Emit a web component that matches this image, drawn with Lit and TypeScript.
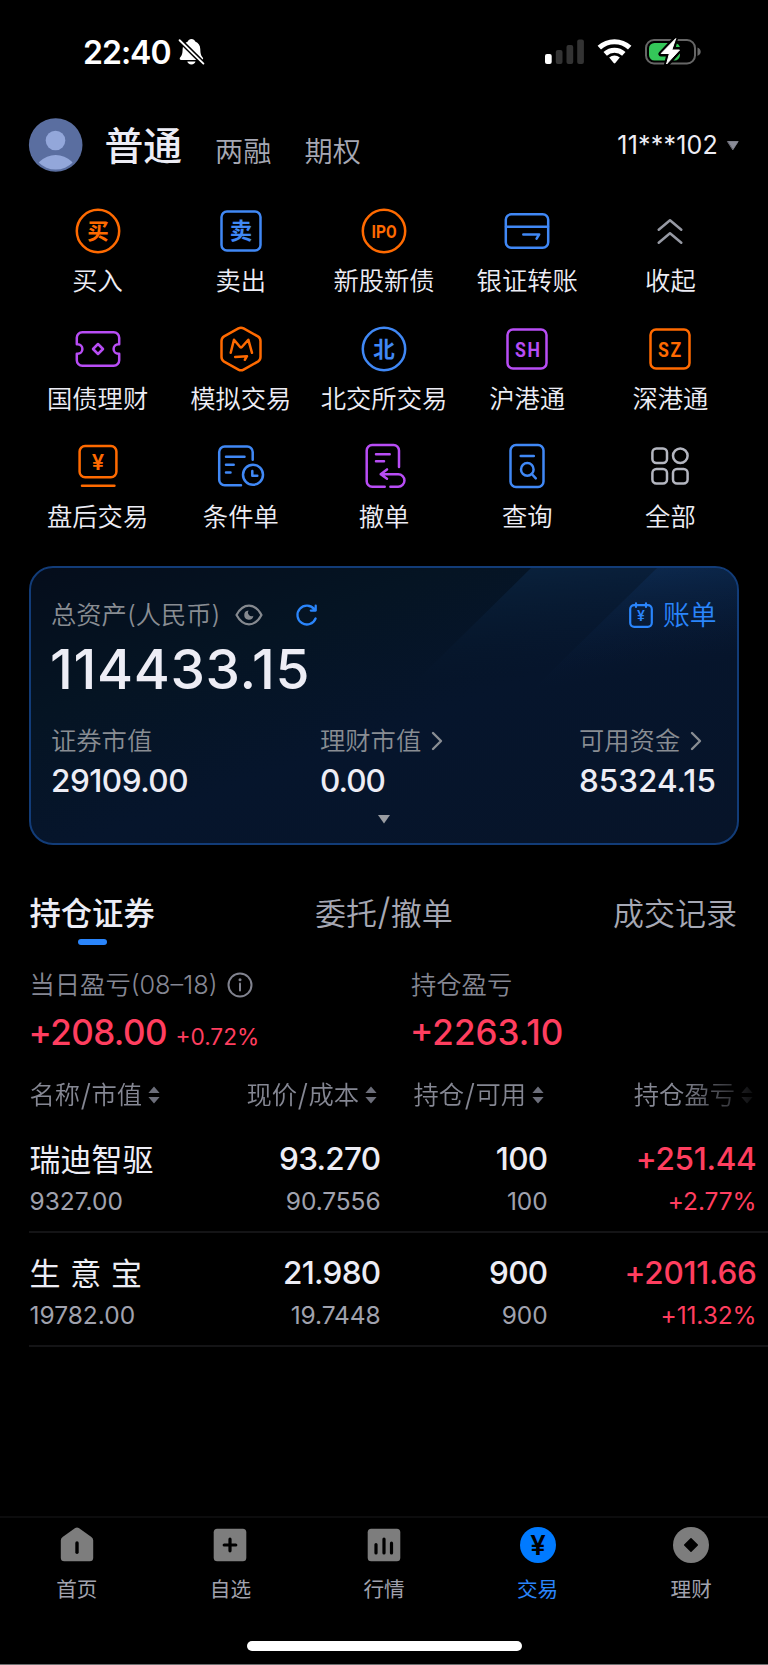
import { LitElement, html, css, svg } from "lit";
import { customElement } from "lit/decorators.js";

const O = "#ff6a00";
const B = "#4088f5";
const P = "#b84df5";

const square = (c: string) => svg`<rect x="-19.5" y="-19.5" width="39" height="39" rx="5.5" stroke=${c}/>`;
const ring = (c: string) => svg`<circle r="21.2" stroke=${c}/>`;
const glyph = (t: string, c: string, size = 21.5) =>
  svg`<text class="cjk" x="0" y=${size * 0.36} font-size=${size} fill=${c}>${t}</text>`;
const ipo = svg`<text class="code" x="-12.5" y="6.5" font-size="18" fill=${O} textLength="25" lengthAdjust="spacingAndGlyphs">IPO</text>`;
const market = (t: string, c: string) =>
  svg`<text class="code wide" transform="scale(.84 1)" x="-14.4" y="7.6" font-size="21" fill=${c}>${t}</text>`;

const actions = [
  { label: "买入", icon: svg`${ring(O)}${glyph("买", O)}` },
  { label: "卖出", icon: svg`${square(B)}${glyph("卖", B, 22.5)}` },
  { label: "新股新债", icon: svg`${ring(O)}${ipo}` },
  { label: "银证转账", icon: svg`<g stroke=${B}><rect x="-21.2" y="-16.7" width="42.4" height="33.4" rx="5.5"/><path d="M-21-4.3H21M-3.7 3.4H12.2L9.6 7.6"/></g>` },
  { label: "收起", icon: svg`<path stroke="#9699a3" d="M-11.3-1.3L0-10.7 11.3-1.3M-11.3 11.7L0 2.3 11.3 11.7"/>` },
  { label: "国债理财", icon: svg`<g stroke=${P}><path d="M-21.2-4.8V-11.2a5.5 5.5 0 0 1 5.5-5.5H15.7a5.5 5.5 0 0 1 5.5 5.5V-4.8h-.8a4.8 4.8 0 0 0 0 9.6h.8V11.2a5.5 5.5 0 0 1-5.5 5.5H-15.7a5.5 5.5 0 0 1-5.5-5.5V4.8h.8a4.8 4.8 0 0 0 0-9.6z"/><path d="M0-5L5 0 0 5-5 0z"/></g>` },
  { label: "模拟交易", icon: svg`<g stroke=${O}><path d="M-2.6-20.6Q0-22 2.6-20.6L16.9-12.6Q19.5-11 19.5-8V8Q19.5 11 16.9 12.6L2.6 20.6Q0 22-2.6 20.6L-16.9 12.6Q-19.5 11-19.5 8V-8Q-19.5-11-16.9-12.6z"/><path d="M-10.3 3.8L-7-9.3-.9-2Q0-1 .9-2L7.3-9.3 11 3.8M-5.8 7.9L6 7.2 3.8 10.8"/></g>` },
  { label: "北交所交易", icon: svg`${ring(B)}${glyph("北", B)}` },
  { label: "沪港通", icon: svg`${square(P)}${market("SH", P)}` },
  { label: "深港通", icon: svg`${square(O)}${market("SZ", O)}` },
  { label: "盘后交易", icon: svg`<g stroke=${O}><rect x="-18.4" y="-20" width="36.8" height="31.3" rx="5.5"/><path d="M-16 19.7H16.4"/></g><text class="yen" y="3.7" font-size="22" fill=${O}>¥</text>` },
  { label: "条件单", icon: svg`<g stroke=${B}><path d="M11.7-6.3V-14a5.5 5.5 0 0 0-5.5-5.5H-16.3a5.5 5.5 0 0 0-5.5 5.5V13.7a5.5 5.5 0 0 0 5.5 5.5H0M-15-9.3H3.5M-15-1.3H-7.3M-15 6.4H-10.5M11.3 5V9.7H16.3"/><circle cx="12" cy="8.8" r="10"/></g>` },
  { label: "撤单", icon: svg`<g stroke=${P}><path d="M15 1V-15.5A5.5 5.5 0 0 0 9.5-21H-11.8a5.5 5.5 0 0 0-5.5 5.5V15.2a5.5 5.5 0 0 0 5.5 5.5H.7M-8-11.8H5.7M-8-4.7H0M3 3.4L-3.3 8.2 3 12.8M-3.3 8.2H14.2a6.25 6.25 0 0 1 0 12.5H6.4"/></g>` },
  { label: "查询", icon: svg`<g stroke=${B}><rect x="-16.5" y="-21" width="33" height="42" rx="5.5"/><path d="M-6.3-10H6.8M4.8 8L8.8 12.3"/><circle cx=".3" cy="3.4" r="6.3"/></g>` },
  { label: "全部", icon: svg`<g stroke="#b4b6c0"><rect x="-17.6" y="-17.6" width="14.6" height="14.6" rx="4"/><circle cx="10.3" cy="-10.3" r="7.3"/><rect x="-17.6" y="3" width="14.6" height="14.6" rx="4"/><rect x="3" y="3" width="14.6" height="14.6" rx="4"/></g>` },
];

const G = "#7d7d7d";
const tabs = [
  { label: "首页", icon: svg`<path fill=${G} d="M-1.8-17Q0-18.2 1.8-17L14.4-8Q16.2-6.6 16.2-4.4V12.8a3.5 3.5 0 0 1-3.5 3.5H-12.7a3.5 3.5 0 0 1-3.5-3.5V-4.4Q-16.2-6.6-14.4-8z"/><path stroke="#000" stroke-width="3.4" d="M0-2V7.3"/>` },
  { label: "自选", icon: svg`<rect x="-16.3" y="-16.3" width="32.6" height="32.6" rx="3.5" fill=${G}/><path stroke="#000" stroke-width="3.2" d="M0-5.8V5.8M-5.8 0H5.8"/>` },
  { label: "行情", icon: svg`<rect x="-16.3" y="-16.3" width="32.6" height="32.6" rx="3.5" fill=${G}/><path stroke="#000" stroke-width="3.2" d="M-8-.5V8M0-6V8M7.5-1.8V8"/>` },
  { label: "交易", active: true, icon: svg`<circle r="18" fill="#007aff"/><text class="yen" y="10" font-size="27.5" fill="#000">¥</text>` },
  { label: "理财", icon: svg`<circle r="18" fill=${G}/><path fill="#000" stroke="#000" stroke-width="1.5" d="M0-6.3L6.3 0 0 6.3-6.3 0z"/>` },
];

const holdings = [
  { name: "瑞迪智驱", value: "9327.00", price: "93.270", cost: "90.7556", qty: "100", free: "100", gain: "+251.44", pct: "+2.77%" },
  { name: "生 意 宝", value: "19782.00", price: "21.980", cost: "19.7448", qty: "900", free: "900", gain: "+2011.66", pct: "+11.32%" },
];

const sorter = html`<svg class="sort" width="12" height="18" viewBox="0 0 12 18"><path d="M6 .5L11.6 7H.4zM6 17.5L11.6 11H.4z"/></svg>`;
const chevron = html`<svg class="chev" width="12" height="20" viewBox="0 0 12 20"><path d="M2 2L10 10 2 18"/></svg>`;
const slash = html`<span class="slash">/</span>`;

@customElement("app-root")
export class AppRoot extends LitElement {
  static styles = css`
    :host { display: flex; flex-direction: column; box-sizing: border-box; width: 768px; height: 1665px; overflow: hidden;
      background: #000; color: #ededf5; font-family: Inter, "Noto Sans CJK SC", sans-serif; font-size: 25.3px; line-height: 30px; white-space: nowrap;
      border-bottom: 1px solid #6e6e70; }
    svg { display: block; flex: none; fill: none; stroke-linecap: round; stroke-linejoin: round; overflow: visible; }
    .status { display: flex; align-items: center; height: 104px; padding: 0 67px 0 83px; color: #fff; }
    .time { font-size: 32px; font-weight: 600; letter-spacing: -1px; padding-top: 1px; }
    .bell { margin-left: 7px; }
    .sys { margin-left: auto; }
    .head { display: flex; align-items: center; height: 82px; padding: 0 29px; }
    .main { margin: 0 0 0 21.5px; font-size: 38.8px; font-weight: 500; line-height: 40px; padding-top: 1px; }
    .alt { font-size: 28.2px; font-weight: 350; color: #a6a8b4; margin: 13.5px 0 0 33px; }
    .alt + .alt { margin-left: 33px; }
    .acct { margin-left: auto; font-size: 25px; letter-spacing: .2px; }
    .tri { margin-left: 9px; }
    .actions { display: grid; grid-template-columns: repeat(5, 1fr); grid-auto-rows: 117.8px; padding: 20.9px 26px 0; }
    .action { display: flex; flex-direction: column; align-items: center; gap: 11.5px; }
    .action span { font-weight: 350; }
    .action svg { stroke-width: 2.5; }
    text { stroke: none; text-anchor: middle; font-weight: 700; }
    .cjk { font-family: "Noto Sans CJK SC", sans-serif; }
    .code { font-family: Roboto, sans-serif; text-anchor: start; }
    .wide { letter-spacing: 2px; }
    .yen { font-family: Inter, sans-serif; font-weight: 600; }
    .card { position: relative; box-sizing: border-box; height: 279.5px; margin: 5.7px 29px 0; border: 2px solid #123c78; border-radius: 24px; padding: 32px 20.5px 0 20px;
      background: linear-gradient(160deg, #050d1b 0%, #051423 28%, #06152c 55%, #071429 100%); overflow: hidden; }
    .beams { position: absolute; inset: 0; }
    .line { position: relative; display: flex; align-items: center; color: #898d93; font-weight: 350; }
    .eye { margin-left: 15px; }
    .reload { margin-left: 32.5px; }
    .bill { display: flex; align-items: center; gap: 10px; margin-left: auto; color: #2a85fb; font-size: 26.8px; }
    .total { position: relative; font-size: 55px; font-weight: 500; line-height: 60px; margin: 9px 0 0 -1px; letter-spacing: .65px; }
    .stats { position: relative; display: flex; margin-top: 27px; }
    .stat { display: flex; flex-direction: column; gap: 10px; }
    .s1 { width: 269px; }
    .s2 { width: 259px; }
    .stat b { font-size: 31.5px; font-weight: 500; color: #ededf5; }
    .s1 b { letter-spacing: -.5px; }
    .s2 b { letter-spacing: -1px; }
    .chev { margin-left: 10px; stroke: #898d93; stroke-width: 2.4; }
    .more { position: relative; margin: 19.5px auto 0; }
    .tabs { display: flex; justify-content: space-between; margin: 50.5px 31px 0 29.5px; font-size: 31px; line-height: 36px; color: #a6a8b4; font-weight: 350; }
    .slash { font-size: 1.2em; line-height: 0; margin: 0 .4px; }
    .on { display: flex; flex-direction: column; color: #ededf5; font-weight: 500; font-size: 31.3px; }
    .on i { width: 29px; height: 5.5px; border-radius: 3px; background: #2a85fb; margin: 7.5px 0 0 48.5px; }
    .pl { display: grid; grid-template-columns: 381.5px 1fr; padding: 25.5px 0 0 29.5px; color: #858793; }
    .pl .cap { display: flex; align-items: center; gap: 9.5px; height: 30px; font-weight: 350; }
    .amt { display: flex; align-items: baseline; gap: 8.5px; color: #ff3e5f; font-size: 35px; font-weight: 500; line-height: 40px; margin: 12px 0 0 -1px; height: 40px; }
    .today { letter-spacing: -.6px; }
    .amt small { font-size: 22.7px; font-weight: 400; }
    .row { display: grid; grid-template-columns: 170.5px 180.5px 167px 209px; margin-left: 29px; padding-left: .5px; }
    .th { color: #858793; font-weight: 350; margin-top: 27.5px; -webkit-mask-image: linear-gradient(90deg, #000 650px, transparent 735px); mask-image: linear-gradient(90deg, #000 650px, transparent 735px); }
    .th div { display: flex; align-items: center; justify-content: flex-end; padding-right: 3.5px; }
    .th div:first-child { justify-content: flex-start; }
    .sort { fill: #6c6e7a; margin-left: 6px; }
    .td { height: 114.2px; box-sizing: border-box; border-bottom: 2px solid #141416; text-align: right; align-content: start; row-gap: 12px; padding-top: 25.2px; }
    .th + .td { height: 122.8px; padding-top: 34px; }
    .td .l { text-align: left; }
    .name { font-size: 31px; word-spacing: 1px; padding-top: 1px; margin-bottom: -1px; }
    .num { font-size: 31.5px; font-weight: 500; letter-spacing: -.7px; }
    .num.up { letter-spacing: -.3px; }
    .sub { font-size: 24.5px; color: #a0a2ae; letter-spacing: -.1px; }
    .sub.l { letter-spacing: 0; }
    .td .up { color: #ff3e5f; }
    .bar { display: grid; grid-template-columns: repeat(5, 1fr); margin-top: auto; height: 125.5px; box-sizing: border-box; border-top: 2px solid #0c0c0d; padding-top: 7.5px; font-size: 20.6px; color: #a0a2ae; }
    .bar div { display: flex; flex-direction: column; align-items: center; gap: 9.5px; }
    .bar .active { color: #2a85fb; }
    .home { flex: none; width: 275px; height: 9.5px; border-radius: 5px; background: #fff; margin: 0 auto 13.5px; }
  `;

  render() {
    return html`
      <div class="status">
        <span class="time">22:40</span>
        <svg class="bell" width="27" height="28" viewBox="0 0 27 28">
          <path fill="#fff" d="M13.5 1c1.9 0 3.2 1.1 3.7 2.6 3.3 1.4 5 4 5.1 7.6.1 4.5.7 6.2 2.4 8.2.8 1 .4 2.6-1.2 2.6H3.3C1.7 22 1.3 20.4 2.1 19.4c1.8-2 2.4-3.7 2.5-8.2.1-3.6 1.9-6.2 5.2-7.6C10.3 2.1 11.6 1 13.5 1zM9.3 23.6h8.2a4.2 3.6 0 0 1-8.2 0z"/>
          <path stroke="#000" stroke-width="4.800" stroke-linecap="butt" d="M0 .5L27 27.300"/>
          <path stroke="#fff" stroke-width="1.900" d="M1.600 2.200L25.400 25.600"/>
        </svg>
        <svg class="sys" width="156" height="28" viewBox="0 0 156 28">
          <rect x="0" y="16" width="6.700" height="10" rx="2" fill="#fff"/>
          <g fill="#333"><rect x="10.800" y="12" width="6.700" height="14" rx="2"/><rect x="21.500" y="7" width="6.700" height="19" rx="2"/><rect x="32.200" y="1.500" width="6.700" height="24.500" rx="2"/></g>
          <g stroke="#fff" stroke-width="5" stroke-linecap="butt"><path d="M54.300 9.700A22.300 22.300 0 0 1 84.700 9.700"/><path d="M60.200 15.800A13.700 13.700 0 0 1 78.800 15.800"/></g>
          <path fill="#fff" d="M64.200 19.400a8 8 0 0 1 10.600 0L70.300 25q-.8.800-1.600 0z"/>
          <rect x="101" y="2" width="49" height="23.500" rx="8" stroke="#666" stroke-width="2"/>
          <path fill="#6a6a6a" d="M152.500 9.500q3.200 1.500 3.200 4.200t-3.200 4.200z"/>
          <rect x="104" y="5" width="31" height="17.500" rx="5.500" fill="#34c759"/>
          <path d="M130.500.6L115.800 16h8.200l-2.600 10.800L135 11.600h-7.400z" fill="#fff" stroke="#000" stroke-width="5"/>
          <path d="M130.500.8L116.200 15.500h8.200l-2.800 10.500L134.500 12h-7.400z" fill="#fff" stroke="#fff" stroke-width="1"/>
        </svg>
      </div>
      <div class="head">
        <svg width="54" height="54" viewBox="0 0 54 54">
          <clipPath id="face"><circle cx="26.700" cy="27" r="24.500"/></clipPath>
          <circle cx="26.700" cy="27" r="26.800" fill="#5a6ea0"/><circle cx="26.500" cy="22.500" r="9.800" fill="#93a7da"/>
          <circle cx="26.700" cy="59.500" r="22.500" fill="#93a7da" clip-path="url(#face)"/>
        </svg>
        <span class="main">普通</span><span class="alt">两融</span><span class="alt">期权</span>
        <span class="acct">11***102</span>
        <svg class="tri" width="12" height="9" viewBox="0 0 12 9"><path fill="#8a8c98" d="M.8.500h10.400L6 8.500z" stroke="#8a8c98" stroke-width=".8"/></svg>
      </div>
      <div class="actions">
        ${actions.map((a) => html`<div class="action"><svg width="48" height="48" viewBox="-24 -24 48 48">${a.icon}</svg><span>${a.label}</span></div>`)}
      </div>
      <div class="card">
        <svg class="beams" width="706" height="276" viewBox="0 0 706 276">
          <defs>
            <linearGradient id="b1" x1="0" y1="0" x2=".25" y2="1"><stop offset="0" stop-color="#123a68" stop-opacity=".4"/><stop offset=".85" stop-color="#0a2040" stop-opacity="0"/></linearGradient>
            <linearGradient id="b2" x1="0" y1="0" x2=".25" y2="1"><stop offset="0" stop-color="#14407c" stop-opacity=".38"/><stop offset=".9" stop-color="#0a2040" stop-opacity="0"/></linearGradient>
          </defs>
          <path fill="url(#b1)" d="M500 0H706V130H368z"/><path fill="url(#b2)" d="M626 0H706V130H493z"/>
        </svg>
        <div class="line"><span>总资产(人民币)</span>
          <svg class="eye" width="28" height="22" viewBox="0 0 28 22"><path stroke="#85898f" stroke-width="2.200" d="M1.500 11Q6.500 1.700 14 1.700T26.500 11Q21.500 20.300 14 20.300T1.500 11z"/><path fill="#85898f" d="M13.500 6.500a4.600 4.600 0 1 0 4.900 5.200 3.700 3.700 0 0 1-4.900-5.200z"/></svg>
          <svg class="reload" width="22" height="22" viewBox="0 0 22 22"><path stroke="#2a85fb" stroke-width="2.300" d="M19.600 14.500A9.400 9.400 0 1 1 18.300 5.300L19.200 6.300M19.700 1.700V6.600H14.800"/></svg>
          <div class="bill"><svg width="24" height="26" viewBox="0 0 24 26"><rect x="1.200" y="3.200" width="21.600" height="21.600" rx="4" stroke="#2a85fb" stroke-width="2.200"/><path stroke="#2a85fb" stroke-width="2.200" d="M7 1.300V5M17 1.300V5"/><text class="yen" x="12" y="19" font-size="14" fill="#2a85fb">¥</text></svg><span>账单</span></div>
        </div>
        <div class="total">114433.15</div>
        <div class="stats">
          <div class="stat s1"><div class="line">证券市值</div><b>29109.00</b></div>
          <div class="stat s2"><div class="line">理财市值${chevron}</div><b>0.00</b></div>
          <div class="stat"><div class="line">可用资金${chevron}</div><b>85324.15</b></div>
        </div>
        <svg class="more" width="12" height="9" viewBox="0 0 12 9"><path fill="#9a9da3" d="M0 0H12L6 8.500z"/></svg>
      </div>
      <div class="tabs"><div class="on"><span>持仓证券</span><i></i></div><span>委托${slash}撤单</span><span>成交记录</span></div>
      <div class="pl">
        <div><div class="cap"><span>当日盈亏(08–18)</span><svg width="26" height="26" viewBox="0 0 26 26"><circle cx="13" cy="13" r="11.500" stroke="#81838f" stroke-width="2"/><path stroke="#81838f" stroke-width="2" d="M13 11.500V18.500"/><circle cx="13" cy="7.800" r="1.500" fill="#81838f"/></svg></div>
          <div class="amt"><span class="today">+208.00</span><small>+0.72%</small></div></div>
        <div><div class="cap">持仓盈亏</div><div class="amt"><span>+2263.10</span></div></div>
      </div>
      <div class="row th"><div>名称${slash}市值${sorter}</div><div>现价${slash}成本${sorter}</div><div>持仓${slash}可用${sorter}</div><div>持仓盈亏${sorter}</div></div>
      ${holdings.map((h) => html`<div class="row td">
        <span class="name l">${h.name}</span><span class="num">${h.price}</span><span class="num">${h.qty}</span><span class="num up">${h.gain}</span>
        <span class="sub l">${h.value}</span><span class="sub">${h.cost}</span><span class="sub">${h.free}</span><span class="sub up">${h.pct}</span>
      </div>`)}
      <div class="bar">
        ${tabs.map((t) => html`<div class=${t.active ? "active" : ""}><svg width="40" height="40" viewBox="-20 -20 40 40">${t.icon}</svg><span>${t.label}</span></div>`)}
      </div>
      <div class="home"></div>
    `;
  }
}
